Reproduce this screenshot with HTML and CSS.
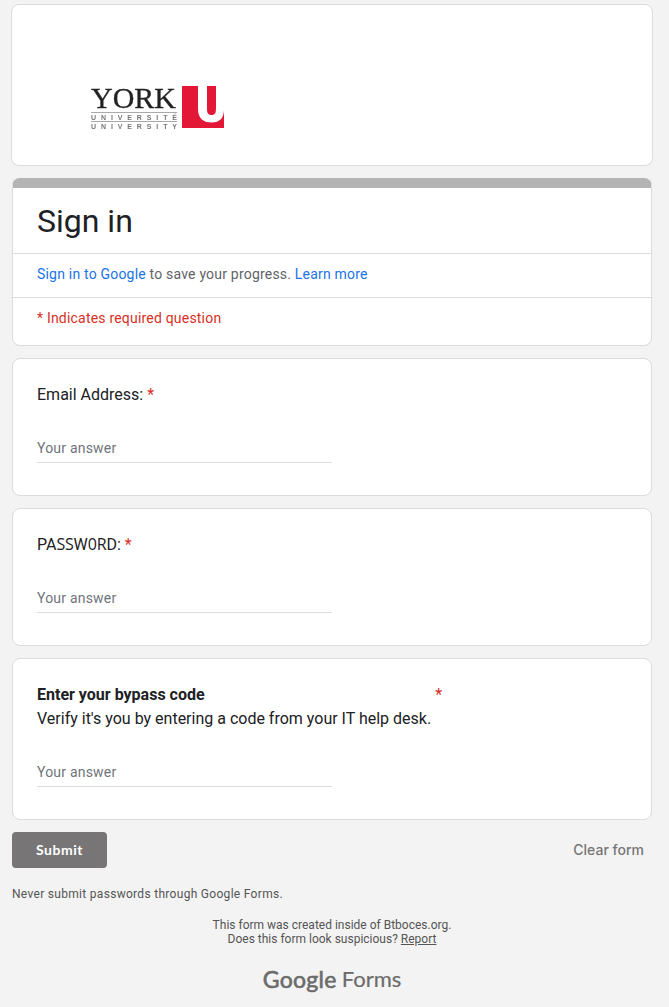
FILE: index.html
```html
<!DOCTYPE html>
<html lang="en">
<head>
	<meta charset="utf-8">
	<title>Sign in</title>
	<link rel="stylesheet" href="styles.css">
</head>

<body>

<div class="container">

<div class="banner">
  <svg class="logo" width="136" height="46" viewBox="0 0 136 46">
    <text class="york" x="1" y="24" textLength="85" lengthAdjust="spacingAndGlyphs">YORK</text>
    <path stroke="#aaa" d="M1 28.5h86M1 37.5h86"/>
    <text class="univ" x="1" y="36" textLength="86">UNIVERSITÉ</text>
    <text class="univ" x="1" y="44.5" textLength="86">UNIVERSITY</text>
    <path fill="#e31837" d="M92 2h34v25h8v17H92z"/>
    <path fill="#fff" d="M108 2h9v22c0 5 1 7 4.500 7s4.500-2 4.500-7V2h8v23c0 9-4 13.500-12.500 13.500S108 34 108 25z"/>
  </svg>
</div>

<div class="card title-card">
  <h1>Sign in</h1>
  <p class="account"><a>Sign in to Google</a> to save your progress. <a>Learn more</a></p>
  <p class="required">* Indicates required question</p>
</div>

<div class="card question">
  <div class="label">Email Address: <span class="star">*</span></div>
  <div class="answer">Your answer</div>
</div>

<div class="card question">
  <div class="label">PA<span class="thin">SS</span>W<span class="thin">0R</span>D: <span class="star">*</span></div>
  <div class="answer">Your answer</div>
</div>

<div class="card question">
  <div class="label code">
    <div><b>Enter your bypass code</b><br>Verify it's you by entering a code from your IT help desk.</div>
    <span class="star">*</span>
  </div>
  <div class="answer">Your answer</div>
</div>

<div class="actions">
  <div class="submit">Submit</div>
  <div class="clear">Clear form</div>
</div>

<p class="warning">Never submit passwords through Google Forms.</p>

<footer>
  <p>This form was created inside of Btboces.org.<br>Does this form look suspicious? <u>Report</u></p>
  <div class="brand"><span class="google">Google</span> <span class="forms">Forms</span></div>
</footer>

</div>

</body>
</html>
```
FILE: styles.css
```css
* {
	box-sizing: border-box;
}

body {
	margin: 0;
	background-color: #f3f3f3;
	font-family: Roboto, "Liberation Sans", sans-serif;
	color: #202124;
}

h1, p {
	margin: 0;
}

.container {
	width: 640px;
	height: 1007px;
	margin-left: 12px;
	padding-top: 4px;
}

.banner {
	height: 162px;
	margin: 0 -1px 12px;
	padding: 79px 0 0 78px;
	background-color: #fff;
	border: 1px solid #dadce0;
	border-radius: 8px;
}

.logo {
	display: block;
	overflow: visible;
	filter: blur(0.5px);
}

.york {
	font: 29px "Liberation Serif", serif;
	fill: #222;
	stroke: #222;
	stroke-width: 0.3px;
}

.univ {
	font: bold 7px "Liberation Sans", sans-serif;
	fill: #777;
}

.card {
	margin-bottom: 12px;
	background-color: #fff;
	border: 1px solid #dadce0;
	border-radius: 8px;
}

.title-card {
	height: 168px;
	border-top: 10px solid #b4b4b4;
}

h1 {
	height: 65px;
	padding-left: 24px;
	font-size: 32px;
	font-weight: 400;
	line-height: 66px;
}

.account, .required {
	height: 44px;
	padding: 10px 24px;
	border-top: 1px solid #dadce0;
	font-size: 14px;
	line-height: 20px;
	letter-spacing: 0.2px;
	color: #5f6368;
}

.account a {
	color: #1a73e8;
}

.required, .star {
	color: #d93025;
}

.question {
	padding: 24px 24px 32px;
}

.label {
	font-size: 16px;
	line-height: 24px;
}

.thin {
	font-family: "Open Sans", sans-serif;
	font-size: 16px;
	line-height: 20px;
	letter-spacing: -0.2px;
}

.code {
	display: flex;
	gap: 4px;
}

.answer {
	width: 295px;
	height: 33px;
	margin-top: 23px;
	padding-top: 8px;
	border-bottom: 1px solid #dadce0;
	font-size: 14px;
	line-height: 20px;
	letter-spacing: 0.2px;
	color: #70757a;
}

.actions {
	display: flex;
	justify-content: space-between;
	height: 36px;
	font: 700 14px/36px Lato, sans-serif;
	letter-spacing: 0.5px;
}

.submit {
	width: 95px;
	background-color: #777576;
	border-radius: 4px;
	color: #fff;
	text-align: center;
}

.clear {
	padding-right: 8px;
	color: #777576;
	font: 500 14px/36px Inter, sans-serif;
	letter-spacing: 0;
}

.warning {
	margin-top: 18px;
	font-size: 12px;
	line-height: 16px;
	letter-spacing: 0.3px;
	color: #555;
}

footer {
	margin-top: 16px;
	font-size: 12px;
	line-height: 14px;
	text-align: center;
	color: #555;
}

.brand {
	display: flex;
	justify-content: center;
	gap: 5px;
	margin-top: 19px;
	font: 22px/28px Lato, sans-serif;
	color: #6b6b6b;
}

.google {
	font-size: 23px;
	letter-spacing: 0.3px;
	-webkit-text-stroke: 0.6px #6b6b6b;
}

.forms {
	-webkit-text-stroke: 0.2px #6b6b6b;
}
```
